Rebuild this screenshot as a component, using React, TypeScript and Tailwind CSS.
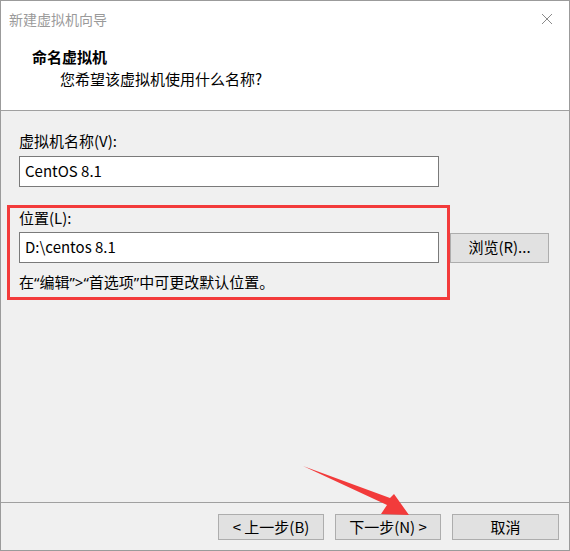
export default function App() {
    const font = { fontFamily: '"Noto Sans CJK SC", "Noto Sans", sans-serif' };
    const latin = { fontFamily: '"Noto Sans", sans-serif' };

    return (
        <div style={font} className="relative w-[570px] h-[551px] flex flex-col border border-[#9b9b9b] bg-[#f0f0f0] text-[15px] text-black overflow-hidden">
            {/* header */}
            <div className="h-[110px] bg-white border-b border-[#a0a0a0] flex flex-col shrink-0">
                <div className="h-[36px] flex items-center justify-between pl-[8px] pr-[16px]">
                    <span className="text-[14px] text-[#9a9a9a]">新建虚拟机向导</span>
                    <svg width="12" height="12" viewBox="0 0 12 12">
                        <path d="M1 1 L11 11 M11 1 L1 11" stroke="#8a8a8a" strokeWidth="1" />
                    </svg>
                </div>
                <div className="mt-[10px] pl-[31px] leading-[20px] font-bold text-[15px]">命名虚拟机</div>
                <div className="mt-[2px] pl-[59px] leading-[20px]">您希望该虚拟机使用什么名称?</div>
            </div>

            {/* body */}
            <div className="flex-1 flex flex-col pl-[18px] pt-[20px]">
                <div className="leading-[20px]">虚拟机名称(V):</div>
                <div className="mt-[5px] w-[420px] h-[31px] bg-white border border-[#7a7a7a] flex items-center pl-[5px]">CentOS 8.1</div>

                <div className="mt-[21px] leading-[20px]">位置(L):</div>
                <div className="mt-[4px] flex items-center gap-[11px]">
                    <div className="w-[420px] h-[31px] bg-white border border-[#7a7a7a] flex items-center pl-[5px]">D:\centos 8.1</div>
                    <button className="w-[99px] h-[30px] bg-[#e1e1e1] border border-[#adadad] flex items-center justify-center">浏览(R)...</button>
                </div>
                <div className="mt-[9px] leading-[20px]">
                    在<span style={latin}>“</span>编辑<span style={latin}>”&gt;“</span>首选项<span style={latin}>”</span>中可更改默认位置。
                </div>
            </div>

            {/* footer */}
            <div className="h-[48px] shrink-0 border-t border-[#a0a0a0] flex justify-end items-start gap-[11px] pt-[11px] pr-[10px]">
                <button className="w-[106px] h-[26px] bg-[#e1e1e1] border border-[#adadad] flex items-center justify-center">&lt; 上一步(B)</button>
                <button className="w-[106px] h-[26px] bg-[#e1e1e1] border border-[#adadad] flex items-center justify-center">下一步(N) &gt;</button>
                <button className="w-[107px] h-[26px] bg-[#e1e1e1] border border-[#adadad] flex items-center justify-center">取消</button>
            </div>

            {/* annotation: red box + arrow */}
            <div className="absolute left-[6px] top-[204px] w-[443px] h-[95px] border-[3px] border-[#f33b3b]" />
            <svg className="absolute left-0 top-0 pointer-events-none" width="570" height="551">
                <polygon points="302,465 389,497 393,493 408,514 380,513 386,504" fill="#f23b3b" />
            </svg>
        </div>
    );
}
